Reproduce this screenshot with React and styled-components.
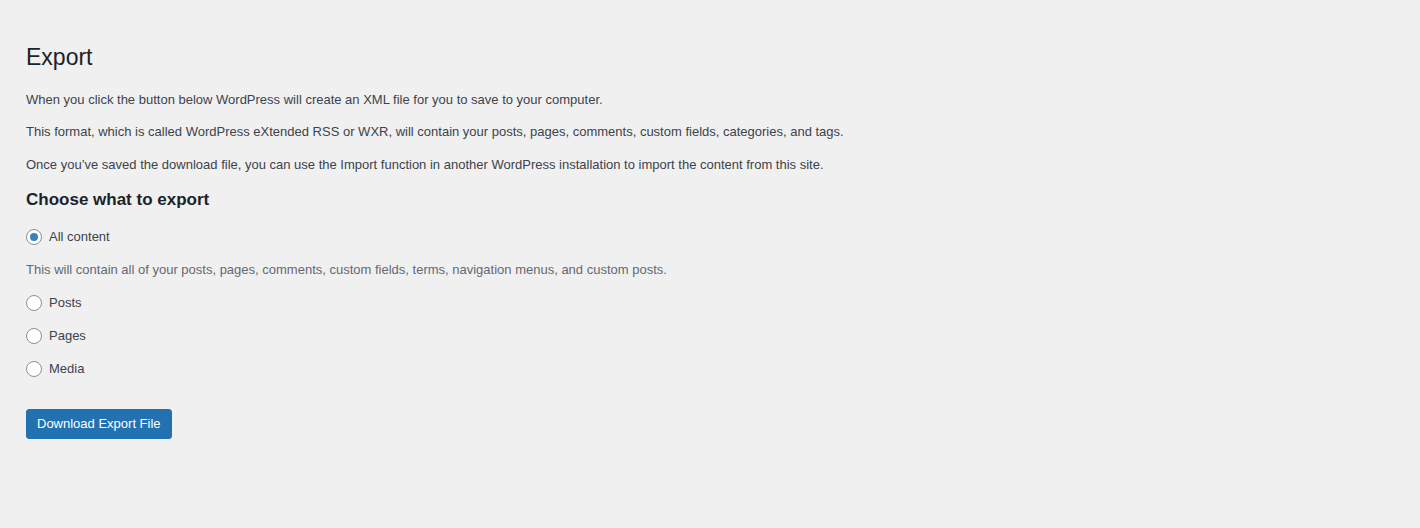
import styled, { createGlobalStyle } from 'styled-components';

const Global = createGlobalStyle`
  html, body {
    margin: 0;
    background: #f0f0f1;
  }
  body {
    font-family: "Liberation Sans", Arial, sans-serif;
    font-size: 13px;
    line-height: 1.4em;
    color: #3c434a;
  }
`

const options = [
    { id: 'all', label: 'All content', checked: true },
    { id: 'posts', label: 'Posts' },
    { id: 'pages', label: 'Pages' },
    { id: 'attachment', label: 'Media' },
];

const App = () => {
    return <Wrap>
        <Global />
        <Title>Export</Title>
        <Text>When you click the button below WordPress will create an XML file for you to save to your computer.</Text>
        <Text>This format, which is called WordPress eXtended RSS or WXR, will contain your posts, pages, comments, custom fields, categories, and tags.</Text>
        <Text>Once you’ve saved the download file, you can use the Import function in another WordPress installation to import the content from this site.</Text>

        <Heading>Choose what to export</Heading>
        <Fieldset>
            {options.map((o) => (
                <Group key={o.id}>
                    <Row>
                        <Radio checked={o.checked} />
                        <span>{o.label}</span>
                    </Row>
                    {o.id === 'all' && (
                        <Description>This will contain all of your posts, pages, comments, custom fields, terms, navigation menus, and custom posts.</Description>
                    )}
                </Group>
            ))}
        </Fieldset>

        <Button type="button">Download Export File</Button>
    </Wrap>;
};

const Group = styled.div`
  display: contents;
`

const Wrap = styled.div`
  padding: 34px 20px 0 26px;
  display: flex;
  flex-direction: column;
  align-items: flex-start;
`

const Title = styled.h1`
  font-size: 23px;
  font-weight: 400;
  line-height: 1.3;
  margin: 0;
  padding: 9px 0 4px;
  color: #1d2327;
`

const Text = styled.p`
  font-size: 13px;
  line-height: 1.5;
  margin: 13px 0 0;
`

const Heading = styled.h2`
  font-size: 17px;
  font-weight: 600;
  line-height: 20px;
  color: #1d2327;
  margin: 16px 0 0;
`

const Fieldset = styled.div`
  display: flex;
  flex-direction: column;
  gap: 13px;
  margin-top: 17px;
`

const Row = styled.label`
  display: flex;
  align-items: center;
  gap: 7px;
  height: 20px;
  line-height: 20px;
`

const Radio = styled.span`
  box-sizing: border-box;
  width: 16px;
  height: 16px;
  border-radius: 50%;
  border: 1px solid #8c8f94;
  background: #fff;
  display: flex;
  align-items: center;
  justify-content: center;

  &::before {
    content: '';
    width: 8px;
    height: 8px;
    border-radius: 50%;
    background: #3582c4;
    display: ${(p) => (p.checked ? 'block' : 'none')};
  }
`

const Description = styled.div`
  color: #646970;
  height: 20px;
  line-height: 20px;
`

const Button = styled.button`
  margin-top: 30px;
  font-family: "Liberation Sans", Arial, sans-serif;
  font-size: 13px;
  line-height: 28px;
  min-height: 30px;
  padding: 0 10px;
  background: #2271b1;
  border: 1px solid #2271b1;
  border-radius: 3px;
  color: #fff;
  cursor: pointer;
`

export default App;
